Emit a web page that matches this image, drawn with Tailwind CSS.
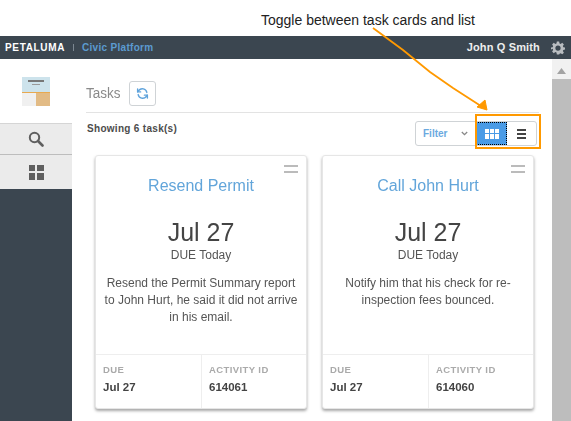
<!DOCTYPE html>
<html lang="en">
<head>
<meta charset="UTF-8">
<title>Tasks</title>
<script src="https://cdn.jsdelivr.net/npm/@tailwindcss/browser@4"></script>
</head>
<body class="bg-white font-['Liberation_Sans',Arial,sans-serif] overflow-hidden">
<div class="relative w-[571px] h-[421px] overflow-hidden">
  <!-- caption above app -->
  <div class="h-9 pt-[12px] pl-[261px] text-[14px] leading-[16px] text-[#222]">Toggle between task cards and list</div>

  <!-- top bar -->
  <header class="h-[23px] bg-[#3b4650] flex items-center pl-[5px] pr-[6px]">
    <span class="text-[10px] font-bold text-white tracking-[0.65px]">PETALUMA</span>
    <span class="ml-[8px] w-px h-[7px] bg-[#7c8791]"></span>
    <span class="ml-[8px] text-[10px] font-bold text-[#5b9bd0] tracking-[0.3px]">Civic Platform</span>
    <span class="ml-auto text-[11px] font-bold text-[#eee] tracking-[0.15px]">John Q Smith</span>
    <svg class="ml-[11px]" width="14" height="14" viewBox="0 0 24 24" fill="#b9bdc1"><path fill-rule="evenodd" d="M10 1h4l.6 3.2 2 .8L19.300 3.200l2.800 2.800-1.800 2.700.8 2 3.200.600v3.400l-3.200.6-.8 2 1.800 2.700-2.800 2.800-2.700-1.800-2 .8L14 23h-4l-.6-3.200-2-.8-2.700 1.800-2.800-2.800 1.800-2.700-.8-2L-.3 14.700v-3.400l3.200-.6.8-2L1.900 6l2.800-2.800L7.400 5l2-.8zM12 7.500a4.500 4.500 0 1 0 0 9 4.500 4.500 0 0 0 0-9z"/></svg>
  </header>

  <div class="flex h-[362px]">
    <!-- sidebar -->
    <aside class="w-[72px] shrink-0 flex flex-col bg-[#3b4650]">
      <div class="h-[64px] bg-white flex justify-center pt-[18px]">
        <div class="w-[28px] h-[29px] flex flex-col">
          <div class="h-[15px] bg-[#cde3ec] flex flex-col items-center pt-[3px] gap-[2px]">
            <span class="block w-[16px] h-[2px] bg-[#777]"></span>
            <span class="block w-[8px] h-px bg-[#999]"></span>
          </div>
          <div class="h-px bg-[#e8a94f]"></div>
          <div class="flex flex-1">
            <span class="w-[14px] bg-[#f0f0f0]"></span>
            <span class="w-[14px] bg-[#e2bb85]"></span>
          </div>
        </div>
      </div>
      <div class="h-[32px] bg-[#ebebeb] border-t border-[#d5d5d5] border-b border-b-[#bdbdbd] flex items-center justify-center">
        <svg width="16" height="16" viewBox="0 0 16 16" fill="none" stroke="#5f5f5f"><circle cx="6.500" cy="6.500" r="4.700" stroke-width="2"/><path d="M10 10l4.500 4.500" stroke-width="2.600" stroke-linecap="round"/></svg>
      </div>
      <div class="h-[34px] bg-[#ebebeb] flex items-center justify-center">
        <div class="grid grid-cols-2 gap-[2px]">
          <span class="w-[6.500px] h-[6.500px] bg-[#5f5f5f]"></span>
          <span class="w-[6.500px] h-[6.500px] bg-[#5f5f5f]"></span>
          <span class="w-[6.500px] h-[6.500px] bg-[#5f5f5f]"></span>
          <span class="w-[6.500px] h-[6.500px] bg-[#5f5f5f]"></span>
        </div>
      </div>
    </aside>

    <!-- main -->
    <main class="flex-1 pl-[14px] pr-[14px] min-w-0">
      <div class="h-[54px] flex items-end pb-[6px] border-b border-[#e3e3e3] w-[453px] gap-[8px]">
        <span class="text-[13.500px] leading-[24px] text-[#8a8a8a] scale-y-110">Tasks</span>
        <span class="w-[27px] h-[25px] rounded-[3px] border border-[#cfd3d6] flex items-center justify-center">
          <svg width="13" height="13" viewBox="0 0 24 24" fill="none" stroke="#5fa3dc" stroke-width="2.600" stroke-linecap="round" stroke-linejoin="round"><path d="M20 10A8.500 8.500 0 0 0 5 6.500L3 9"/><path d="M3 3.500V9h5.500"/><path d="M4 14a8.500 8.500 0 0 0 15 3.500L21 15"/><path d="M21 20.500V15h-5.500"/></svg>
        </span>
      </div>
      <div class="flex w-[453px] justify-between items-start">
        <span class="pl-[1px] pt-[10px] text-[10px] leading-[12px] font-bold text-[#4c4c4c] tracking-[0.3px]">Showing 6 task(s)</span>
        <div class="mt-[8px] mr-[2px] h-[25px] flex rounded-[3px] border border-[#cfd3d6] overflow-hidden">
          <span class="w-[60px] flex items-center pl-[7px] text-[10px] font-bold text-[#6aa9e0] border-r border-[#e6e6e6]">Filter
            <svg class="ml-[14px]" width="7" height="5" viewBox="0 0 7 5" fill="none" stroke="#888" stroke-width="1.300"><path d="M.8 1l2.700 2.700L6.200 1"/></svg>
          </span>
          <span class="w-[31px] bg-[#4a9be6] outline-1 outline-dotted outline-black -outline-offset-1 flex items-center justify-center">
            <span class="grid grid-cols-3 gap-px">
              <span class="w-[4px] h-[4.500px] bg-white"></span><span class="w-[4px] h-[4.500px] bg-white"></span><span class="w-[4px] h-[4.500px] bg-white"></span>
              <span class="w-[4px] h-[4.500px] bg-white"></span><span class="w-[4px] h-[4.500px] bg-white"></span><span class="w-[4px] h-[4.500px] bg-white"></span>
            </span>
          </span>
          <span class="w-[29px] flex flex-col items-center justify-center gap-[2px]">
            <span class="block w-[9px] h-[2px] bg-[#444]"></span>
            <span class="block w-[9px] h-[2px] bg-[#444]"></span>
            <span class="block w-[9px] h-[2px] bg-[#444]"></span>
          </span>
        </div>
      </div>

      <!-- cards -->
      <div class="flex gap-[15px] ml-[9px] mt-[9px]">
        <article class="w-[212px] h-[254px] shrink-0 bg-white rounded-[3px] border border-[#e6e6e6] shadow-[0_2px_3px_rgba(0,0,0,0.35)] flex flex-col relative blur-[0.5px]">
          <span class="absolute top-[9px] right-[8px] w-[14px] h-[8px] border-y-2 border-[#bbb]"></span>
          <h3 class="pt-[20px] text-center text-[16px] leading-[20px] text-[#62a5da]">Resend Permit</h3>
          <div class="pt-[21px] text-center text-[25px] leading-[31px] text-[#444]">Jul 27</div>
          <div class="text-center text-[12px] leading-[15px] text-[#555]">DUE Today</div>
          <p class="pt-[12px] px-[7px] text-center text-[12px] leading-[17px] text-[#555]">Resend the Permit Summary report to John Hurt, he said it did not arrive in his email.</p>
          <div class="mt-auto h-[54px] flex border-t border-[#eee] text-[11.500px]">
            <div class="w-[106px] border-r border-[#eee] pl-[7px] pt-[9px]">
              <div class="text-[9.500px] leading-[12px] font-bold text-[#aaa] tracking-[0.4px] mb-[3px]">DUE</div>
              <div class="leading-[16px] font-bold text-[#444]">Jul 27</div>
            </div>
            <div class="flex-1 pl-[7px] pt-[9px]">
              <div class="text-[9.500px] leading-[12px] font-bold text-[#aaa] tracking-[0.4px] mb-[3px]">ACTIVITY ID</div>
              <div class="leading-[16px] font-bold text-[#444]">614061</div>
            </div>
          </div>
        </article>
        <article class="w-[212px] h-[254px] shrink-0 bg-white rounded-[3px] border border-[#e6e6e6] shadow-[0_2px_3px_rgba(0,0,0,0.35)] flex flex-col relative blur-[0.5px]">
          <span class="absolute top-[9px] right-[8px] w-[14px] h-[8px] border-y-2 border-[#bbb]"></span>
          <h3 class="pt-[20px] text-center text-[16px] leading-[20px] text-[#62a5da]">Call John Hurt</h3>
          <div class="pt-[21px] text-center text-[25px] leading-[31px] text-[#444]">Jul 27</div>
          <div class="text-center text-[12px] leading-[15px] text-[#555]">DUE Today</div>
          <p class="pt-[12px] px-[20px] text-center text-[12px] leading-[17px] text-[#555]">Notify him that his check for re-inspection fees bounced.</p>
          <div class="mt-auto h-[54px] flex border-t border-[#eee] text-[11.500px]">
            <div class="w-[106px] border-r border-[#eee] pl-[7px] pt-[9px]">
              <div class="text-[9.500px] leading-[12px] font-bold text-[#aaa] tracking-[0.4px] mb-[3px]">DUE</div>
              <div class="leading-[16px] font-bold text-[#444]">Jul 27</div>
            </div>
            <div class="flex-1 pl-[7px] pt-[9px]">
              <div class="text-[9.500px] leading-[12px] font-bold text-[#aaa] tracking-[0.4px] mb-[3px]">ACTIVITY ID</div>
              <div class="leading-[16px] font-bold text-[#444]">614060</div>
            </div>
          </div>
        </article>
      </div>
    </main>

    <!-- scrollbar -->
    <div class="w-[19px] shrink-0 bg-[#f1f1f1] flex flex-col items-center">
      <svg class="mt-[9px] mb-[5px]" width="9" height="6" viewBox="0 0 9 6" fill="#a3a3a3"><path d="M4.500 0L9 6H0z"/></svg>
      <div class="w-full flex-1 bg-[#bdbdbd]"></div>
    </div>
  </div>

  <!-- annotation overlay -->
  <svg class="absolute top-0 left-0" width="571" height="421" fill="none">
    <path d="M373 28L403 50L430 72L453 88L484 108" stroke="#ff9900" stroke-width="1.800"/>
    <path d="M487 110L477 107L485 100Z" fill="#ff9900" stroke="#ff9900"/>
    <rect x="476" y="115" width="64" height="33" stroke="#ff9900" stroke-width="2"/>
  </svg>
</div>
</body>
</html>
